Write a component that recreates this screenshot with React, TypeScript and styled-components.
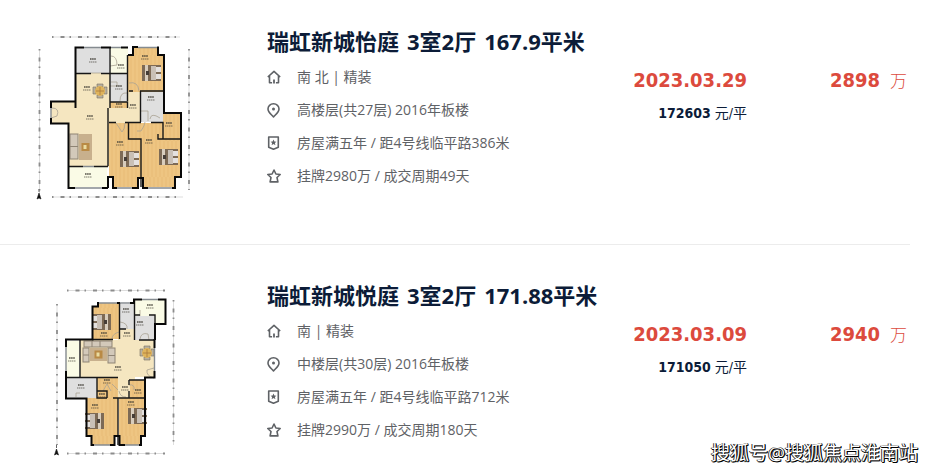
import React from "react";
import styled, { createGlobalStyle } from "styled-components";

const latin = '"Open Sans", "Noto Sans CJK SC", sans-serif';
const numeric = '"DejaVu Sans Condensed", "Noto Sans CJK SC", sans-serif';

const GlobalStyle = createGlobalStyle`
  * { box-sizing: border-box; }
  body { margin: 0; background: #fff; font-family: ${latin}; }
`;

const Page = styled.main`
  position: relative;
  padding-right: 28px;
`;

const List = styled.ul`
  list-style: none;
  margin: 0;
  padding: 0;
`;

const Item = styled.li`
  display: flex;
  align-items: flex-start;
  padding: 34px 0 42px;
  &:first-child { padding-top: 25px; }
  &:not(:last-child) { border-bottom: 1px solid #ececec; }
  &:last-child { padding-bottom: 6px; }
`;

const PlanLink = styled.a`
  flex: none;
  width: 267px;
  padding: 5px 0 0 36px;
`;

const PlanDrawing = styled.svg`
  display: block;
`;

const Details = styled.div`
  flex: 1;
  min-width: 0;
`;

const Title = styled.h2`
  display: flex;
  gap: 8px;
  margin: 0 0 10px;
  font-size: 22px;
  line-height: 32px;
  font-weight: 700;
  color: #0c1c38;
  white-space: nowrap;
`;

const Facts = styled.ul`
  list-style: none;
  margin: 0;
  padding: 0;
  display: grid;
  gap: 13px;
`;

const Fact = styled.li`
  display: flex;
  align-items: center;
  gap: 15px;
  height: 20px;
  font-size: 14px;
  line-height: 20px;
  color: #5f6266;
  white-space: nowrap;
  svg { flex: none; }
`;

const Deal = styled.div`
  flex: none;
  padding-top: 40px;
  text-align: right;
  font-family: ${numeric};
`;

const DealDate = styled.time`
  display: block;
  font-size: 20px;
  line-height: 30px;
  font-weight: 700;
  color: #dc4a3d;
`;

const UnitPrice = styled.p`
  margin: 8px 0 0;
  font-size: 14px;
  line-height: 20px;
  color: #0c1c38;
`;

const Total = styled.p`
  flex: none;
  display: flex;
  justify-content: flex-end;
  align-items: baseline;
  gap: 10px;
  width: 163px;
  margin: 0;
  padding: 40px 3px 0 0;
  font-family: ${numeric};
  line-height: 30px;
  color: #dc4a3d;
  strong { font-size: 20px; }
  span { font-size: 17px; font-weight: 300; }
`;

const Watermark = styled.p`
  position: absolute;
  right: 20px;
  bottom: 0;
  margin: 0;
  font-size: 19px;
  line-height: 26px;
  color: #fff;
  white-space: nowrap;
  text-shadow: 1px 1px 0 #000, 1px 0 0 #000, -1px 0 0 #333, 0 1px 0 #000;
`;

type Box = [number, number, number, number];
type Fill = "wood" | "tile" | "marble" | "balcony";
type Room = { fill: Fill; box: Box };

const fills: Record<Fill, string> = {
  wood: "#eec582",
  tile: "#dfdfdf",
  marble: "#f5e6c0",
  balcony: "#fafbe6",
};

type Plan = {
  view: string;
  width: number;
  height: number;
  rooms: Room[];
  outer: string;
  inner: string;
  windows: string;
  doors: string;
  rulers: string;
  beds: [number, number, boolean][];
  sofas: Box[];
  rug: Box;
  dining: [number, number];
  labels: [number, number][];
  north: [number, number];
};

const planA: Plan = {
  view: "36 30 154 172",
  width: 154,
  height: 172,
  rooms: [
    { fill: "marble", box: [75, 73, 56, 50] },
    { fill: "marble", box: [51, 102, 25, 21] },
    { fill: "marble", box: [69, 122, 40, 45] },
    { fill: "marble", box: [108, 91, 33, 31] },
    { fill: "tile", box: [76, 48, 33, 25] },
    { fill: "balcony", box: [110, 48, 18, 25] },
    { fill: "tile", box: [110, 74, 17, 28] },
    { fill: "wood", box: [128, 55, 35, 37] },
    { fill: "wood", box: [133, 48, 24, 7] },
    { fill: "tile", box: [141, 92, 22, 30] },
    { fill: "wood", box: [110, 102, 17, 6] },
    { fill: "wood", box: [109, 123, 32, 54] },
    { fill: "wood", box: [113, 177, 25, 10] },
    { fill: "wood", box: [141, 123, 39, 54] },
    { fill: "wood", box: [143, 177, 32, 10] },
    { fill: "wood", box: [163, 113, 17, 28] },
    { fill: "balcony", box: [69, 167, 38, 20] },
  ],
  outer:
    "M75.5 108V47.5H84M101 47.5H111M121 47.5H128M128 55H133V47H138M157 47.5H158V55H164V113H181V177H175V188H172M132 188H138V178H143V188H148M75 101.5H51V108M51 118V123.5H68.5V188H75M102 188H108M108 188V177H113V188H117",
  inner:
    "M75 73.5H91M101 73.5H128M110 48V108M127.5 55V101M110 102H127.5V108M129 91H133M140 91H164M140.5 91V122M108 108V166M68 166.5H83M94 166.5H108M109 122.5H116M125 122.5H141M128.5 122V139H141V187M151 122.5H163V139H181M158 134V139H181",
  windows:
    "M84 47.5H101M111 47.5H121M138 47.5H157M75 188H102M117 188H132M148 188H172M164 94V101M51 108V118M83 166.5H94",
  doors:
    "M91 73H101M111 56Q117 56 117 65L110 66M127 93Q120 92 120 101M129 83Q138 81 139 91M52 108Q60 108 57 116L51 118M116 123L122 132Q125 129 125 123M137 131L141 131Q145 125 145 122M111 82H117V86H110M141 111H148V121M150 119Q151 112 160 118",
  rulers:
    "M52 37H180M39.500 49V193M189 49V190M52 197H183",
  beds: [[142, 65, false], [120, 151, false], [159, 149, false]],
  sofas: [[70, 134, 8, 25]],
  rug: [79, 134, 13, 26],
  dining: [100, 91],
  labels: [[93, 60], [121, 66], [145, 57], [87, 88], [119, 87], [151, 98], [90, 117], [133, 106], [169, 124], [120, 143], [149, 141], [88, 175], [119, 105]],
  north: [39, 197],
};

const planB: Plan = {
  view: "36 284 154 176",
  width: 154,
  height: 176,
  rooms: [
    { fill: "marble", box: [80, 340, 74, 37] },
    { fill: "marble", box: [118, 329, 17, 69] },
    { fill: "wood", box: [93, 307, 26, 32] },
    { fill: "wood", box: [98, 303, 21, 5] },
    { fill: "tile", box: [120, 304, 14, 25] },
    { fill: "balcony", box: [135, 300, 30, 24] },
    { fill: "tile", box: [135, 316, 19, 24] },
    { fill: "balcony", box: [66, 341, 13, 36] },
    { fill: "tile", box: [67, 378, 30, 20] },
    { fill: "wood", box: [97, 378, 21, 24] },
    { fill: "wood", box: [130, 380, 15, 18] },
    { fill: "wood", box: [87, 398, 31, 38] },
    { fill: "wood", box: [92, 436, 22, 9] },
    { fill: "wood", box: [119, 398, 26, 38] },
    { fill: "wood", box: [120, 436, 21, 9] },
  ],
  outer:
    "M98 302V306.500H92.500V339.500H66V347M66 371V398.500H86.500V436H91.500V445H94M110 445H114.500V436H119.500V445H125M139 445H141V436H145V377.500H154.500V371M154.500 348V339M117 303H120M130 303H134V299.500H142M158 299.500H165.500V324H155V340",
  inner:
    "M80 340V377M92 339.500H113M119.500 303V339M119.500 329H126M134.500 300V340M134.500 315H140M149 315H155V325M139 340H155M66 377.500H118M97 377V398H107M113 398H118M97 391H107V398M118 398V445M118 398H145M129 380V385M129 391V398M129 380H145",
  windows:
    "M98 303H117M120 303H130M142 299.500H158M66 347V371M94 445H110M125 445H139M66 383V391M154.500 348V371",
  doors:
    "M120 322Q128 323 127 329M112 339Q112 334 119 332M140 339Q141 332 148 334L149 340M154 378Q146 376 147 370L154 368M107 384L103 391M107 384L111 391M112 384L118 390M129 385Q135 384 134 390M119 391Q120 397 126 397M140 316V310M76 397V393H80",
  rulers:
    "M67 290.500H165M57 304V445M173.500 300V445M67 453.500H165",
  beds: [[94, 314, true], [87, 413, true], [128, 408, false]],
  sofas: [[84, 341, 28, 6], [108, 348, 7, 15], [83, 348, 6, 14]],
  rug: [90, 348, 17, 13],
  dining: [147, 353],
  labels: [[126, 310], [150, 306], [140, 323], [104, 334], [127, 334], [72, 359], [118, 368], [81, 386], [107, 381], [138, 391], [125, 388], [102, 395], [95, 406], [131, 403]],
  north: [56.5, 453],
};

const Bed = ({ x, y, flip }: { x: number; y: number; flip: boolean }) => (
  <g transform={flip ? `translate(${x + 17} ${y}) scale(-1 1)` : `translate(${x} ${y})`}>
    <rect width="19" height="16" fill="#7d6a55" />
    <rect x="3" width="3" height="16" fill="#d8cdbd" />
    <rect x="9" y="1" width="5" height="14" fill="#c9c0b6" />
    <rect x="14" y="2" width="5" height="5" fill="#e4e1df" />
    <rect x="14" y="9" width="5" height="5" fill="#e4e1df" />
    <path d="M4 6h3v4h-3z" fill="#453d37" />
  </g>
);

const FloorPlan = ({ plan }: { plan: Plan }) => {
  const [dx, dy] = plan.dining;
  const [nx, ny] = plan.north;
  const [rx, ry, rw, rh] = plan.rug;
  return (
    <PlanDrawing viewBox={plan.view} width={plan.width} height={plan.height} fill="none" aria-hidden="true">
      {plan.rooms.map(({ fill, box: [x, y, w, h] }) => (
        <g key={`${x}-${y}`}>
          <rect x={x} y={y} width={w} height={h} fill={fills[fill]} />
          {fill === "wood" && (
            <path
              d={Array.from({ length: Math.floor(w / 4) }, (_, i) => `M${x + 3 + i * 4} ${y}v${h}`).join("")}
              stroke="#d9a557"
              strokeWidth="1"
              opacity="0.25"
            />
          )}
        </g>
      ))}
      <rect x={rx} y={ry} width={rw} height={rh} fill="#c8b08d" />
      <rect x={rx + rw / 2 - 4} y={ry + rh / 2 - 4} width="8" height="8" fill="#b98a45" />
      <rect x={rx + rw / 2 - 2} y={ry + rh / 2 - 2} width="3" height="4" fill="#eadba0" />
      {plan.sofas.map(([x, y, w, h]) => (
        <g key={`${x}-${y}`}>
          <rect x={x} y={y} width={w} height={h} fill="#d3c9ba" stroke="#8f8475" />
          <path d={w > h ? `M${x + 8} ${y}v${h}m8 ${-h}v${h}` : `M${x} ${y + h / 2}h${w}`} stroke="#8f8475" />
        </g>
      ))}
      <g transform={`translate(${dx} ${dy})`}>
        <path d="M-3-7h6v3h-6zM-3 4h6v3h-6zM-7-4h3v7h-3zM4-4h3v7h-3z" fill="#b8b0a0" stroke="#77705f" strokeWidth="0.6" />
        <circle r="5" fill="#dfb45c" />
        <path d="M-4 0H4M0-4V4" stroke="#a87a3c" strokeWidth="0.8" />
      </g>
      {plan.beds.map(([x, y, flip]) => (
        <Bed key={`${x}-${y}`} x={x} y={y} flip={flip} />
      ))}
      <path d={plan.doors} stroke="#aaa293" strokeWidth="0.8" />
      <path d={plan.windows} stroke="#858b90" strokeWidth="1.4" />
      <path d={plan.inner} stroke="#171717" strokeWidth="1.4" />
      <path d={plan.outer} stroke="#080808" strokeWidth="2" />
      {plan.labels.map(([x, y]) => (
        <g key={`${x}-${y}`} stroke="#3c3931" opacity="0.65">
          <path d={`M${x - 3} ${y - 1}h6`} strokeWidth="2" strokeDasharray="1.6 .5" />
          <path d={`M${x - 4} ${y + 2}h8`} strokeWidth="1.2" strokeDasharray="1.5 .5" />
        </g>
      ))}
      <path d={plan.rulers} stroke="#c6c6c6" strokeWidth="0.6" />
      <path d={plan.rulers} stroke="#8d8d8d" strokeWidth="1.8" strokeDasharray="1.5 7 4 5" />
      <path d={`M${nx} ${ny - 4}l2 6-2-1-2 1z`} fill="#111" stroke="#111" strokeWidth="0.6" />
      <path d={`M${nx} ${ny - 8}v3`} stroke="#666" />
    </PlanDrawing>
  );
};

type IconName = "home" | "pin" | "badge" | "star";

const iconPaths: Record<IconName, React.ReactNode> = {
  home: (
    <>
      <path d="M.8 7 7 1.300 13.200 7M2.500 6v6.800h2.600M11.500 6v6.800H8.900" />
      <path d="M7 9.500v4" strokeWidth="1.800" />
    </>
  ),
  pin: (
    <>
      <path d="M6.500.8C3.200.8 1 3.100 1 5.900c0 3.300 3.200 5.500 5.500 8 2.300-2.500 5.500-4.700 5.500-8C12 3.100 9.800.8 6.500.8Z" />
      <circle cx="6.500" cy="6" r="1.500" fill="#5f6266" stroke="none" />
    </>
  ),
  badge: (
    <>
      <path d="M1.700 1h9.600v10.200L6.500 13.200l-4.800-2z" />
      <path d="m6.500 3.600.9 1.900 2 .2-1.500 1.400.5 2.100-1.900-1.100-1.900 1.100.5-2.100-1.500-1.400 2-.2z" fill="#5f6266" stroke="none" />
    </>
  ),
  star: <path d="m7 1 1.900 4 4.300.5-3.200 3 .9 4.400H3.100L4 8.500l-3.200-3L5.100 5z" />,
};

const FactIcon = ({ name }: { name: IconName }) => (
  <svg width="15" height="15" viewBox="0 0 15 15" fill="none" stroke="#5f6266" strokeWidth="1.600" strokeLinejoin="round" aria-hidden="true">
    {iconPaths[name]}
  </svg>
);

type Listing = {
  title: [string, string, string];
  facts: [IconName, string][];
  date: string;
  unit: string;
  total: string;
  plan: Plan;
};

const listings: Listing[] = [
  {
    title: ["瑞虹新城怡庭", "3室2厅", "167.9平米"],
    facts: [
      ["home", "南 北 | 精装"],
      ["pin", "高楼层(共27层) 2016年板楼"],
      ["badge", "房屋满五年 / 距4号线临平路386米"],
      ["star", "挂牌2980万 / 成交周期49天"],
    ],
    date: "2023.03.29",
    unit: "172603",
    total: "2898",
    plan: planA,
  },
  {
    title: ["瑞虹新城悦庭", "3室2厅", "171.88平米"],
    facts: [
      ["home", "南 | 精装"],
      ["pin", "中楼层(共30层) 2016年板楼"],
      ["badge", "房屋满五年 / 距4号线临平路712米"],
      ["star", "挂牌2990万 / 成交周期180天"],
    ],
    date: "2023.03.09",
    unit: "171050",
    total: "2940",
    plan: planB,
  },
];

export default function App() {
  return (
    <Page lang="zh-CN">
      <GlobalStyle />
      <List>
        {listings.map((item) => (
          <Item key={item.unit}>
            <PlanLink href="#" aria-label={item.title.join(" ")}>
              <FloorPlan plan={item.plan} />
            </PlanLink>
            <Details>
              <Title>
                {item.title.map((part) => (
                  <span key={part}>{part}</span>
                ))}
              </Title>
              <Facts>
                {item.facts.map(([icon, text]) => (
                  <Fact key={icon}>
                    <FactIcon name={icon} />
                    {text}
                  </Fact>
                ))}
              </Facts>
            </Details>
            <Deal>
              <DealDate>{item.date}</DealDate>
              <UnitPrice>
                <strong>{item.unit}</strong> 元/平
              </UnitPrice>
            </Deal>
            <Total>
              <strong>{item.total}</strong>
              <span>万</span>
            </Total>
          </Item>
        ))}
      </List>
      <Watermark>搜狐号@搜狐焦点淮南站</Watermark>
    </Page>
  );
}
